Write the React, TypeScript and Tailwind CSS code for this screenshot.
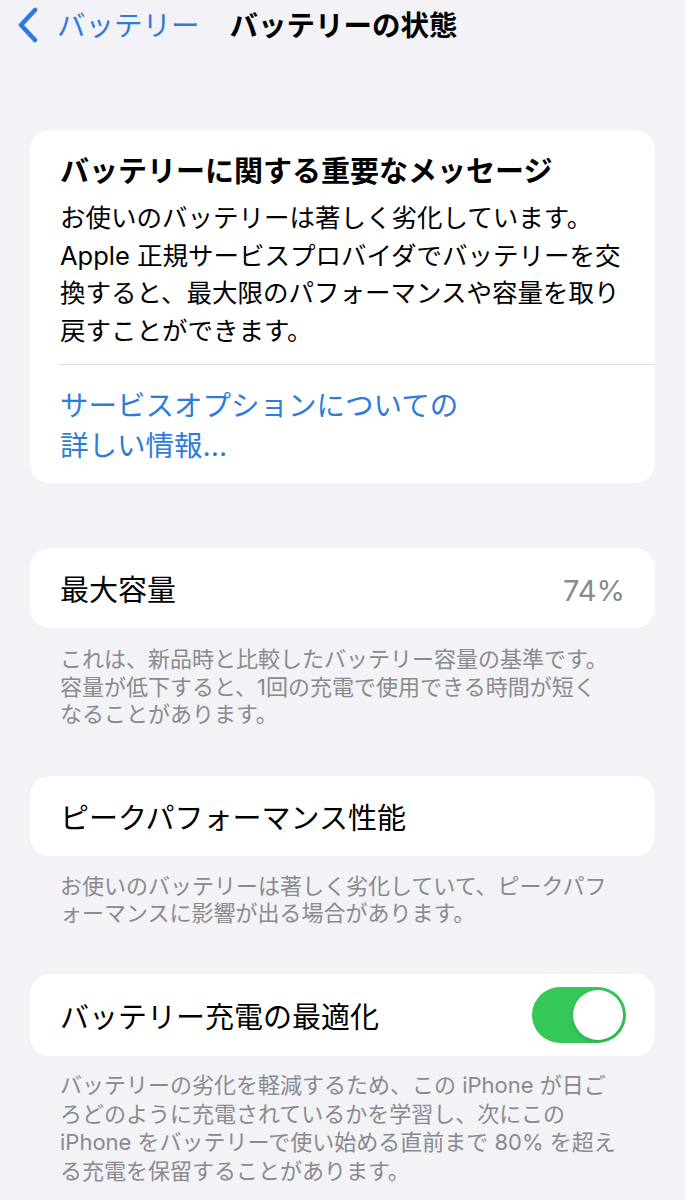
import React from 'react';

const font = { fontFamily: 'Inter, "Noto Sans CJK JP", sans-serif' };

function Chevron() {
  return (
    <svg width="22" height="36" viewBox="0 0 22 36" fill="none">
      <path d="M18 3L4 18l14 15" stroke="#2f7bdc" strokeWidth="4.6" strokeLinecap="round" strokeLinejoin="round" />
    </svg>
  );
}

function Toggle() {
  return (
    <div className="flex h-[56px] w-[94px] items-center justify-end rounded-full bg-[#34c759] p-[3px]">
      <div className="h-[50px] w-[50px] rounded-full bg-white shadow-[0_2px_4px_rgba(0,0,0,0.15)]" />
    </div>
  );
}

export default function App() {
  return (
    <div className="min-h-screen w-full bg-[#f2f2f7] pb-10 text-black" style={font}>
      <div className="flex h-[50px] items-center pl-[17px]">
        <Chevron />
        <span className="ml-[18px] pt-[2px] text-[28.5px] leading-[40px] text-[#2f7bdc]">バッテリー</span>
        <span className="ml-[30px] pt-[2px] text-[28.5px] font-bold leading-[40px]">バッテリーの状態</span>
      </div>

      <div className="mx-[30px] mt-[80px] rounded-[20px] bg-white">
        <div className="px-[30px] pt-[23px] pb-[15px]">
          <h2 className="text-[29px] font-bold leading-[38px] whitespace-nowrap">バッテリーに関する重要なメッセージ</h2>
          <p className="mt-[8px] text-[25.5px] leading-[37.5px] whitespace-nowrap">
            お使いのバッテリーは著しく劣化しています。
            <br />
            Apple 正規サービスプロバイダでバッテリーを交
            <br />
            換すると、最大限のパフォーマンスや容量を取り
            <br />
            戻すことができます。
          </p>
        </div>
        <div className="ml-[30px] h-px bg-[#dcdce0]" />
        <div className="px-[30px] pt-[21px] pb-[17px] text-[28.5px] leading-[40px] text-[#2f7bdc]">
          サービスオプションについての
          <br />
          詳しい情報...
        </div>
      </div>

      <div className="mx-[30px] mt-[65px] flex h-[80px] items-center justify-between rounded-[20px] bg-white px-[30px]">
        <span className="pt-[5px] text-[29px] leading-[40px]">最大容量</span>
        <span className="pt-[5px] text-[29px] leading-[40px] text-[#8a8a8e]">74%</span>
      </div>
      <p className="mx-[30px] mt-[18px] pl-[30px] text-[22px] leading-[27.5px] text-[#8a8a8e] whitespace-nowrap">
        これは、新品時と比較したバッテリー容量の基準です。
        <br />
        容量が低下すると、1回の充電で使用できる時間が短く
        <br />
        なることがあります。
      </p>

      <div className="mx-[30px] mt-[47.5px] flex h-[80px] items-center rounded-[20px] bg-white px-[30px]">
        <span className="pt-[5px] text-[29px] leading-[40px]">ピークパフォーマンス性能</span>
      </div>
      <p className="mx-[30px] mt-[16.5px] pl-[30px] text-[22px] leading-[27.5px] text-[#8a8a8e] whitespace-nowrap">
        お使いのバッテリーは著しく劣化していて、ピークパフ
        <br />
        ォーマンスに影響が出る場合があります。
      </p>

      <div className="mx-[30px] mt-[46.5px] flex h-[82px] items-center justify-between rounded-[20px] bg-white pl-[30px] pr-[29px]">
        <span className="pt-[5px] text-[29px] leading-[40px]">バッテリー充電の最適化</span>
        <Toggle />
      </div>
      <p className="mx-[30px] mt-[15px] pl-[30px] text-[22px] leading-[28.5px] text-[#8a8a8e] whitespace-nowrap">
        バッテリーの劣化を軽減するため、この iPhone が日ご
        <br />
        ろどのように充電されているかを学習し、次にこの
        <br />
        iPhone をバッテリーで使い始める直前まで 80% を超え
        <br />
        る充電を保留することがあります。
      </p>
    </div>
  );
}
